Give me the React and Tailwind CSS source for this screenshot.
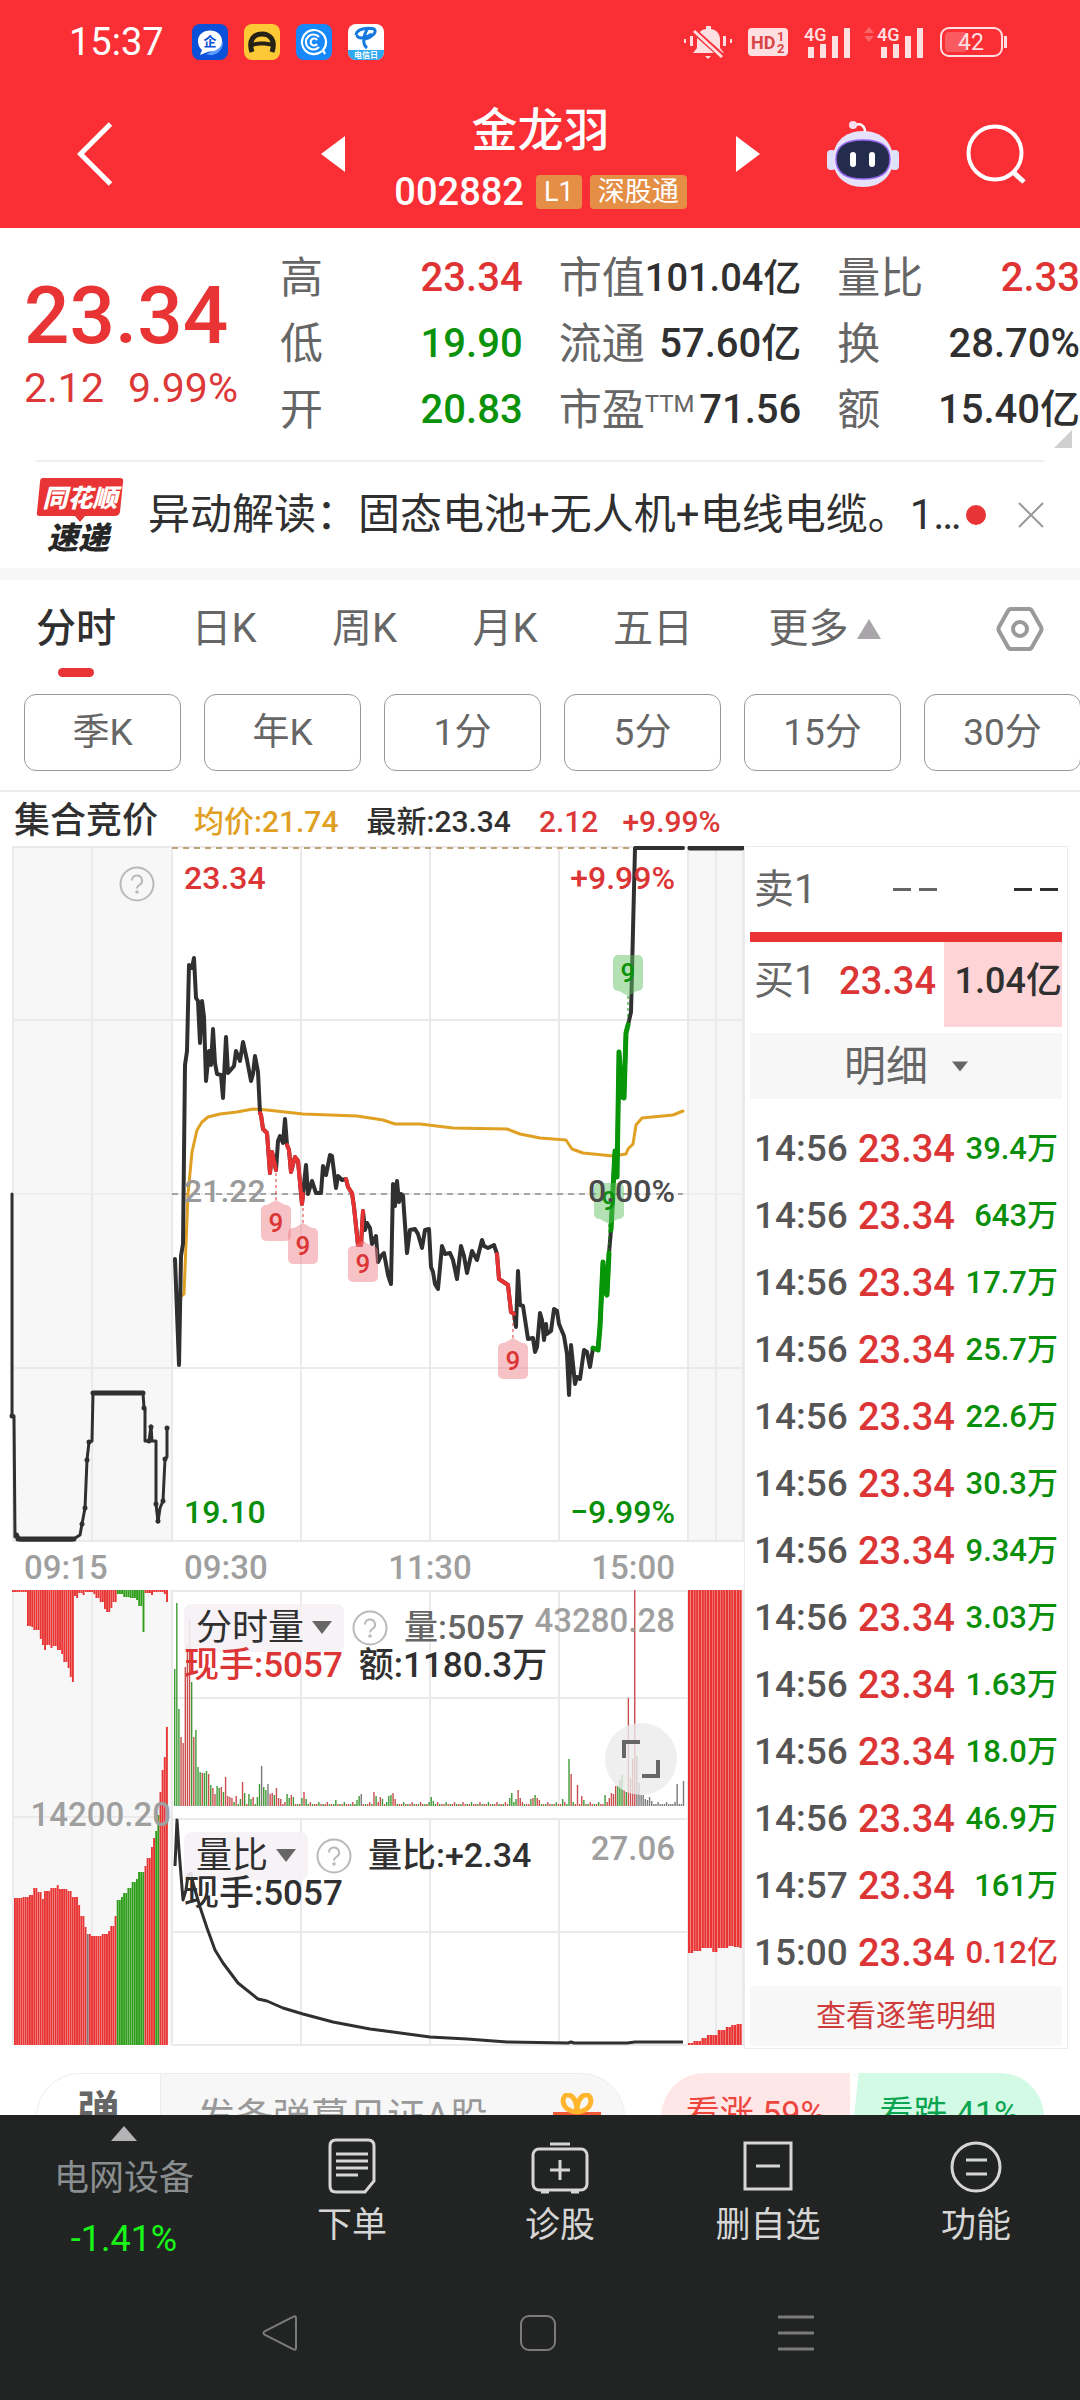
import { useState } from "react";

const stats = [
  [
    { label: "高", value: "23.34", color: "text-[#e03434]" },
    { label: "低", value: "19.90", color: "text-[#0a920a]" },
    { label: "开", value: "20.83", color: "text-[#0a920a]" },
  ],
  [
    { label: "市值", value: "101.04亿", color: "text-[#303030]" },
    { label: "流通", value: "57.60亿", color: "text-[#303030]" },
    { label: "市盈", sup: "TTM", value: "71.56", color: "text-[#303030]" },
  ],
  [
    { label: "量比", value: "2.33", color: "text-[#e03434]" },
    { label: "换", value: "28.70%", color: "text-[#303030]" },
    { label: "额", value: "15.40亿", color: "text-[#303030]" },
  ],
];

const tabs = ["分时", "日K", "周K", "月K", "五日", "更多"];
const periods = ["季K", "年K", "1分", "5分", "15分", "30分"];

const trades = [
  ["14:56", "39.4万"],
  ["14:56", "643万"],
  ["14:56", "17.7万"],
  ["14:56", "25.7万"],
  ["14:56", "22.6万"],
  ["14:56", "30.3万"],
  ["14:56", "9.34万"],
  ["14:56", "3.03万"],
  ["14:56", "1.63万"],
  ["14:56", "18.0万"],
  ["14:56", "46.9万"],
  ["14:57", "161万"],
  ["15:00", "0.12亿"],
];

const RED = "#e83433";
const GREEN = "#2f9e1b";
const INK = "#303030";

const auctionLine =
  "12,1194 12,1416 14,1416 15,1537 17,1534 20,1540 72,1540 80,1535 82,1524 85,1508 87,1460 89,1442 92,1441 93,1393 143,1393 144,1408 145,1409 145,1441 149,1441 151,1426 152,1441 156,1441 156,1504 158,1522 160,1508 163,1501 165,1459 167,1457 167,1428";

const priceLine =
  "175,1259 179,1365 181,1256 183,1244 185,1065 187,1051 189,965 192,968 194,958 196,998 198,1001 200,1043 202,1001 204,1017 206,1081 209,1051 211,1065 213,1029 215,1063 217,1074 221,1075 223,1098 226,1037 228,1073 234,1066 236,1051 240,1061 243,1042 247,1060 251,1081 253,1074 255,1056 258,1072 260,1113 261,1115 263,1129 267,1133 270,1173 272,1152 276,1170 278,1141 280,1136 283,1143 285,1119 287,1145 289,1150 291,1172 295,1157 298,1161 302,1204 303,1194 306,1165 308,1194 312,1181 316,1193 321,1193 323,1166 326,1175 330,1155 332,1156 336,1188 338,1176 342,1180 346,1179 348,1187 352,1193 354,1207 358,1245 361,1245 363,1211 365,1230 367,1223 370,1228 372,1244 376,1236 378,1262 381,1256 384,1253 388,1275 391,1284 393,1184 395,1206 397,1181 399,1202 401,1194 403,1196 407,1253 410,1230 415,1229 418,1234 422,1248 425,1230 429,1229 431,1267 433,1272 435,1284 438,1289 442,1246 445,1254 450,1253 453,1260 457,1279 461,1246 464,1256 467,1273 472,1251 477,1260 482,1240 484,1246 488,1248 494,1245 497,1254 499,1279 508,1285 511,1312 514,1314 516,1327 518,1271 520,1305 523,1306 528,1339 533,1338 535,1352 537,1347 540,1313 542,1320 544,1340 546,1324 547,1334 551,1331 554,1309 557,1311 559,1324 564,1336 567,1354 569,1395 571,1345 575,1384 577,1377 580,1379 584,1350 587,1352 590,1367 593,1348 598,1350 600,1327 603,1262 605,1292 607,1295 609,1253 611,1230 613,1189 615,1151 617,1177 619,1052 622,1097 624,1098 626,1033 628,1025 631,1012 635,848 683,848";

const fallingRuns = [
  "260,1113 261,1115 263,1129 267,1133 270,1173 272,1152 276,1170",
  "287,1145 289,1150 291,1172 295,1157 298,1161 302,1204 303,1194",
  "346,1179 348,1187 352,1193 354,1207 358,1245 361,1245 363,1211",
  "497,1254 499,1279 508,1285 511,1312 514,1314",
];

const risingRuns = [
  "593,1348 598,1350 600,1327 603,1262 605,1292 607,1295 609,1253",
  "611,1230 613,1189 615,1151 617,1177 619,1052 622,1097 624,1098 626,1033 628,1025",
];

const averageLine =
  "180,1297 184,1294 186,1244 188,1194 192,1152 197,1130 202,1122 208,1117 220,1114 237,1112 253,1109 267,1110 303,1114 357,1116 383,1120 395,1124 420,1124 453,1128 507,1129 520,1134 540,1138 566,1140 572,1149 583,1153 613,1156 626,1154 628,1149 633,1144 636,1125 642,1118 673,1115 683,1111";

const ratioLine =
  "175,1866 177,1820 179,1850 183,1900 186,1890 188,1875 191,1873 193,1883 200,1907 207,1928 215,1950 223,1963 238,1983 258,1999 267,2001 283,2008 303,2014 333,2022 370,2029 393,2032 430,2037 467,2039 507,2042 568,2043 571,2042 574,2043 627,2043 635,2042 683,2042";

// [x, edge of the bar], stepwise profile of the call auction volume
const auctionTop = [
  [12, 1592], [26, 1626], [30, 1627], [33, 1630], [38, 1639], [40, 1645], [43, 1650], [45, 1645],
  [49, 1648], [52, 1646], [56, 1650], [60, 1654], [63, 1662], [66, 1668], [69, 1677], [71, 1682],
  [73, 1596], [76, 1598], [78, 1593], [81, 1595], [84, 1592], [92, 1594], [95, 1598], [98, 1602],
  [102, 1609], [105, 1612], [109, 1608], [112, 1602], [115, 1594], [122, 1597], [129, 1598],
  [134, 1600], [138, 1606], [142, 1632], [144, 1593], [149, 1595], [153, 1592], [163, 1594],
  [165, 1602], [167, 1608],
];

const auctionBottom = [
  [14, 1898], [22, 1897], [27, 1895], [33, 1888], [37, 1892], [41, 1899], [43, 1891], [49, 1888],
  [56, 1885], [58, 1889], [67, 1891], [70, 1897], [77, 1905], [80, 1916], [83, 1927], [86, 1934],
  [90, 1936], [100, 1934], [107, 1931], [109, 1926], [113, 1916], [116, 1900], [120, 1897],
  [123, 1893], [126, 1888], [130, 1882], [134, 1879], [138, 1872], [143, 1866], [146, 1858],
  [149, 1847], [152, 1838], [154, 1831], [156, 1815], [158, 1792], [160, 1770], [163, 1757],
  [165, 1727], [168, 1684],
];

const closingTop = [
  [688, 1953], [691, 1951], [701, 1948], [712, 1952], [717, 1948], [726, 1946], [732, 1947], [738, 1948],
];

const closingBottom = [
  [688, 2043], [692, 2041], [700, 2038], [705, 2035], [716, 2030], [725, 2027], [731, 2025], [736, 2024],
];

const profileAt = (profile, x) => {
  let edge = profile[0][1];
  profile.forEach(([px, py]) => {
    if (px <= x) edge = py;
  });
  return edge;
};

const steps = (from, to, size) =>
  Array.from({ length: Math.floor((to - from) / size) }, (_, i) => from + i * size);

const volumeSpikes = {
  0: [137, "g"], 1: [203, "g"], 2: [97, "g"], 3: [69, "r"], 4: [63, "r"], 5: [139, "r"], 6: [161, "r"],
  7: [188, "r"], 8: [124, "g"], 9: [69, "r"], 10: [76, "g"], 11: [39, "g"], 12: [34, "g"], 13: [33, "r"],
  14: [33, "g"], 15: [35, "g"], 16: [32, "r"], 17: [21, "g"], 18: [18, "r"], 19: [12, "r"], 20: [20, "g"],
  21: [18, "g"], 22: [19, "r"], 23: [14, "g"], 24: [29, "r"], 25: [10, "r"], 26: [9, "r"], 27: [8, "r"],
  29: [10, "r"], 31: [7, "g"], 32: [24, "r"], 33: [13, "g"], 35: [12, "g"], 36: [7, "g"], 37: [9, "r"],
  39: [9, "g"], 40: [22, "g"], 41: [40, "k"], 42: [19, "g"], 43: [16, "g"], 44: [22, "k"], 45: [12, "r"],
  46: [13, "r"], 47: [11, "g"], 48: [18, "r"], 49: [8, "r"], 50: [7, "r"], 53: [12, "g"], 54: [8, "g"],
  55: [11, "r"], 56: [9, "g"], 60: [8, "g"], 61: [14, "r"], 62: [7, "g"], 76: [6, "g"], 86: [6, "g"],
  87: [10, "g"], 88: [12, "k"], 94: [14, "r"], 95: [10, "g"], 97: [9, "r"], 98: [7, "g"], 101: [10, "g"],
  102: [11, "g"], 103: [13, "r"], 104: [7, "r"], 121: [9, "g"], 122: [5, "g"], 158: [8, "g"],
  159: [13, "g"], 161: [7, "g"], 162: [16, "r"], 163: [8, "r"], 168: [7, "g"], 169: [8, "r"],
  170: [11, "g"], 171: [8, "r"], 172: [6, "r"], 183: [7, "g"], 186: [47, "g"], 187: [32, "r"],
  190: [21, "r"], 192: [10, "r"], 193: [6, "g"], 203: [11, "g"], 205: [8, "r"], 206: [13, "r"],
  207: [12, "r"], 208: [20, "r"], 209: [20, "g"], 210: [26, "g"], 211: [31, "g"], 212: [16, "r"],
  213: [14, "g"], 214: [108, "r"], 215: [28, "r"], 216: [47, "r"], 217: [216, "r"], 218: [50, "k"],
  219: [23, "k"], 220: [11, "k"], 221: [11, "k"], 222: [7, "k"], 223: [6, "k"], 224: [9, "k"],
  225: [5, "k"], 237: [22, "k"], 240: [25, "k"],
};

const volumeColors = { g: "#3f9a35", r: "#c9504f", k: "#7b7b7b" };

const volumeBars = Array.from({ length: 241 }, (_, i) => {
  const fallback = i > 218 ? "k" : (i * 7) % 5 < 2 ? "g" : "r";
  const [height, kind] = volumeSpikes[i] || [2 + ((i * 13) % 4 === 0 ? 2 : 0), fallback];
  return { x: 174 + i * 2.12, height, fill: volumeColors[kind] };
});

const signals = [
  { x: 276, y: 1205, from: 1172 },
  { x: 303, y: 1228, from: 1206 },
  { x: 363, y: 1246, from: 1246 },
  { x: 513, y: 1343, from: 1316 },
  { x: 628, y: 955, from: 1022, up: true },
  { x: 609, y: 1183, from: 1250, up: true },
];

function Signal({ x, y, from, up }) {
  const color = up ? "#0a920a" : "#dc3535";
  return (
    <g>
      <line x1={x} x2={x} y1={up ? y + 41 : y - 5} y2={from} stroke={color} strokeDasharray="3 3" />
      <g fill={up ? "#62c062" : "#ef8087"} fillOpacity="0.48">
        <rect x={x - 15} y={y} width="30" height="36" rx="5" />
        <path
          d={
            up
              ? `M${x - 9} ${y + 36}h18l-9 5z`
              : `M${x - 9} ${y}h18l-9 -5z`
          }
        />
      </g>
      <text x={x} y={y + 27} textAnchor="middle" fontSize="26" fontWeight="500" fill={color}>
        9
      </text>
    </g>
  );
}

function Charts() {
  const gridX = [301, 430, 559];
  return (
    <svg
      viewBox="0 846 744 1200"
      className="block w-full"
      role="img"
      aria-label="分时走势"
    >
      {/* shaded auction columns */}
      <g fill="#f7f7f7">
        <rect x="13" y="846" width="159" height="695" />
        <rect x="688" y="846" width="56" height="695" />
        <rect x="13" y="1590" width="159" height="455" />
        <rect x="688" y="1590" width="56" height="455" />
      </g>
      <g stroke="#ebe9eb" strokeWidth="2">
        {[847, 1020, 1194, 1368, 1541].map((y) => (
          <line key={y} x1="13" x2="744" y1={y} y2={y} strokeOpacity={y === 1194 ? 0.7 : 1} />
        ))}
        {[13, 92, 172, 688, 716, 743].map((x) => (
          <path key={x} d={`M${x} 846V1541M${x} 1590V2045`} />
        ))}
        {gridX.map((x) => (
          <path key={x} d={`M${x} 846V1541M${x} 1590V1806M${x} 1819V2045`} />
        ))}
        {[1591, 1698, 1819, 1932, 2045].map((y) => (
          <line key={y} x1="172" x2="688" y1={y} y2={y} />
        ))}
        <path d="M13 1817H172" />
      </g>
      <line x1="172" x2="640" y1="848" y2="848" stroke="#bda377" strokeWidth="2" strokeDasharray="6 5" />
      <line x1="172" x2="683" y1="1194" y2="1194" stroke="#a5a5a5" strokeWidth="2" strokeDasharray="6 5" />

      <g fill="none" strokeLinejoin="round" strokeLinecap="round">
        <polyline points={auctionLine} stroke={INK} strokeWidth="3" />
        <path d="M18 1539H74M93 1393H143" stroke={INK} strokeWidth="5" />
        <path
          d="M12 1416h0M82 1524h0M85 1508h0M87 1460h0M89 1442h0M144 1408h0M149 1441h0M151 1427h0M156 1504h0M158 1521h0M163 1501h0M165 1459h0M167 1428h0"
          stroke={INK}
          strokeWidth="5"
        />
        <polyline points={averageLine} stroke="#e0a024" strokeWidth="3" />
        <polyline points={priceLine} stroke={INK} strokeWidth="4" />
        {fallingRuns.map((points) => (
          <polyline key={points} points={points} stroke="#e63232" strokeWidth="4" />
        ))}
        {risingRuns.map((points) => (
          <polyline key={points} points={points} stroke="#079607" strokeWidth="5" />
        ))}
        <path d="M690 848H742" stroke={INK} strokeWidth="5" />
      </g>

      {signals.map((signal) => (
        <Signal key={signal.x} {...signal} />
      ))}

      <g fontSize="32" fontWeight="500">
        <text x="184" y="889" fill="#dc3535">23.34</text>
        <text x="675" y="889" fill="#dc3535" textAnchor="end">+9.99%</text>
        <text x="184" y="1202" fill="#9a9a9a">21.22</text>
        <text x="675" y="1202" fill="#4a4a4a" textAnchor="end">0.00%</text>
        <text x="184" y="1523" fill="#0a8f0a">19.10</text>
        <text x="675" y="1523" fill="#0a8f0a" textAnchor="end">−9.99%</text>
      </g>
      <g fontSize="33" fontWeight="500" fill="#9f9f9f">
        <text x="24" y="1579">09:15</text>
        <text x="184" y="1579">09:30</text>
        <text x="430" y="1579" textAnchor="middle">11:30</text>
        <text x="675" y="1579" textAnchor="end">15:00</text>
      </g>

      {/* call auction volume */}
      {steps(12, 170, 2.14).map((x) => (
        <rect
          key={x}
          x={x}
          y="1590"
          width="1.9"
          height={profileAt(auctionTop, x) - 1590}
          fill={x > 115 && x < 143 ? GREEN : RED}
        />
      ))}
      {steps(14, 170, 2.14).map((x) => {
        const top = profileAt(auctionBottom, x);
        const green = (x > 115 && x < 143) || (x > 155 && x < 157.5);
        const flat = x > 86 && x < 88.5;
        return (
          <rect
            key={x}
            x={x}
            y={top}
            width="1.9"
            height={2045 - top}
            fill={flat ? "#8c7370" : green ? GREEN : RED}
          />
        );
      })}
      {steps(688, 743, 2.7).map((x) => {
        const bottom = profileAt(closingBottom, x);
        return (
          <g key={x} fill={RED}>
            <rect x={x} y="1590" width="2.4" height={profileAt(closingTop, x) - 1590} />
            <rect x={x} y={bottom} width="2.4" height={2045 - bottom} />
          </g>
        );
      })}
      <text x="171" y="1826" textAnchor="end" fontSize="33" fontWeight="500" fill="#9f9f9f">
        14200.20
      </text>

      {volumeBars.map((bar) => (
        <rect key={bar.x} x={bar.x} y={1806 - bar.height} width="1.4" height={bar.height} fill={bar.fill} />
      ))}
      <polyline points={ratioLine} fill="none" stroke={INK} strokeWidth="3" strokeLinejoin="round" />

      <g fontSize="33" fontWeight="500" fill="#9f9f9f" textAnchor="end">
        <text x="675" y="1632">43280.28</text>
        <text x="675" y="1860">27.06</text>
      </g>
    </svg>
  );
}

function Help({ label, className = "" }) {
  return (
    <button type="button" aria-label={label} className={`h-9 w-9 shrink-0 ${className}`}>
      <svg viewBox="0 0 36 36" fill="none" stroke="#b9b9b9" strokeWidth="2">
        <circle cx="18" cy="18" r="16.5" />
        <path d="M13 14.500a5 5 0 1 1 7.500 4.300c-1.800 1-2.500 1.700-2.500 3.700" />
        <circle cx="18" cy="26" r="0.800" fill="#b9b9b9" />
      </svg>
    </button>
  );
}

function IndicatorButton({ children }) {
  return (
    <button
      type="button"
      className="flex h-12 items-center gap-2 rounded-lg bg-[#f5f1f5]/90 px-3 text-4xl text-[#303030]"
    >
      {children}
      <svg viewBox="0 0 20 13" className="h-[13px] w-5" fill="#666">
        <path d="M0 0h20l-10 13z" />
      </svg>
    </button>
  );
}

function StatusBar() {
  return (
    <div className="flex h-20 items-center pl-[69px] pr-[72px] pt-1 text-white">
      <span className="text-[38px] leading-10">15:37</span>
      <div className="ml-7 flex gap-4">
        <svg viewBox="0 0 36 36" className="h-9 w-9">
          <rect width="36" height="36" rx="8" fill="#0b50d8" />
          <path d="M14 30c8 4 18-3 17-13l-5 8z" fill="#5c9bff" />
          <path d="M18 6.500c7 0 12 4.500 12 10.500s-5 10.500-12 10.500l-2 .3-8 3.200 2-5c-2.500-2-4-5-4-9 0-6 5-10.500 12-10.500z" fill="#fff" />
          <text x="18" y="22" fontSize="13" fontWeight="700" textAnchor="middle" fill="#0b50d8">企</text>
        </svg>
        <svg viewBox="0 0 36 36" className="h-9 w-9">
          <rect width="36" height="36" rx="8" fill="#fdc936" />
          <path d="M8 28c-4-12 2-18 10-18s14 6 10 18" fill="none" stroke="#272218" strokeWidth="5" />
          <path d="M8 19c5-2 15-2 20 0v4c-5-2-15-2-20 0z" fill="#272218" />
        </svg>
        <svg viewBox="0 0 36 36" className="h-9 w-9" fill="none" stroke="#fff" strokeWidth="2.200">
          <rect width="36" height="36" rx="8" fill="#1788fa" stroke="none" />
          <path d="M26 27a12 12 0 1 1 4-9c0 4-1 6-3 8l2 4" />
          <path d="M23 23a7.500 7.500 0 1 1 0-10" />
          <path d="M21 20a3.500 3.500 0 1 1 0-4" />
        </svg>
        <svg viewBox="0 0 36 36" className="h-9 w-9">
          <rect width="36" height="36" rx="8" fill="#fff" />
          <path d="M0 26h36v2a8 8 0 0 1-8 8H8a8 8 0 0 1-8-8z" fill="#30a8f0" />
          <path d="M8 11c0-6 12-8 18-6 4 3-3 9-9 10M20 4c-5 8-6 16-1 20M9 11c0 4 8 4 15-1" fill="none" stroke="#1478e0" strokeWidth="3" />
          <text x="18" y="34" fontSize="8" fontWeight="700" textAnchor="middle" fill="#fff">电信日</text>
        </svg>
      </div>

      <div className="ml-auto flex items-center gap-4 text-[#ffe0e2]">
        <svg viewBox="0 0 48 34" className="h-[34px] w-12" fill="currentColor">
          <path d="M22 1h5v3c6 1 9 5 9 11v8l4 5H9l4-5v-8c0-6 3-10 9-11z" />
          <path d="M21 31h6l-3 3z" />
          <path d="M0 14h2v4H0zM6 11h3v10H6zM39 11h3v10h-3zM46 14h2v4h-2z" />
          <path d="M10 6l30 27" stroke="#f92f35" strokeWidth="6" />
          <path d="M10 6l28 26" stroke="currentColor" strokeWidth="3" />
        </svg>
        <svg viewBox="0 0 40 28" className="h-7 w-10">
          <rect width="40" height="28" rx="4" fill="currentColor" />
          <g fill="#d94447" fontWeight="700">
            <text x="3" y="21" fontSize="18">HD</text>
            <text x="29" y="13" fontSize="13">1</text>
            <text x="29" y="25" fontSize="13">2</text>
          </g>
        </svg>
        <svg viewBox="0 0 48 34" className="h-[34px] w-12" fill="currentColor">
          <text x="0" y="16" fontSize="18" fontWeight="500">4G</text>
          <path d="M4 22h6v11H4zM16 19h6v14h-6zM28 11h6v22h-6zM40 3h6v30h-6z" />
        </svg>
        <svg viewBox="0 0 60 34" className="-ml-1 h-[34px] w-[60px]" fill="currentColor">
          <path d="M0 8l5-6 5 6zM0 11h10l-5 6z" fillOpacity="0.3" />
          <text x="13" y="16" fontSize="18" fontWeight="500">4G</text>
          <path d="M17 22h6v11h-6zM29 19h6v14h-6zM41 11h6v22h-6zM53 3h6v30h-6z" />
        </svg>
        <svg viewBox="0 0 68 30" className="h-[30px] w-[68px]">
          <rect x="1" y="1" width="61" height="28" rx="8" fill="none" stroke="currentColor" strokeWidth="2" />
          <rect x="5" y="5" width="22" height="20" rx="4" fill="currentColor" fillOpacity="0.25" />
          <rect x="64" y="9" width="3" height="12" fill="currentColor" />
          <text x="31" y="23" fontSize="23" textAnchor="middle" fill="currentColor">42</text>
        </svg>
      </div>
    </div>
  );
}

function Robot() {
  return (
    <svg viewBox="0 0 72 67" className="h-[67px] w-[72px]">
      <path d="M28 4c6-2 10 1 10 7" fill="none" stroke="#fff" strokeWidth="2.500" />
      <circle cx="26" cy="4" r="4" fill="#f6dfee" />
      <rect x="0" y="29" width="9" height="20" rx="4" fill="#dfe0fa" />
      <rect x="63" y="29" width="9" height="20" rx="4" fill="#dfe0fa" />
      <path d="M36 10c19 0 30 12 30 28S55 66 36 66 6 54 6 38s11-28 30-28z" fill="#e6e2fb" />
      <path d="M36 19c18 0 27 6 27 19s-9 20-27 20S9 51 9 38s9-19 27-19z" fill="#232c4c" stroke="#9464ee" strokeWidth="1.500" />
      <rect x="23" y="31" width="6" height="15" rx="3" fill="#fff" />
      <rect x="42" y="31" width="6" height="15" rx="3" fill="#fff" />
    </svg>
  );
}

function Header() {
  return (
    <header className="bg-[#f92f35] text-white">
      <StatusBar />
      <div className="flex h-[148px] items-center justify-between pl-[77px] pr-[54px]">
        <div className="flex w-[268px] items-center justify-between">
          <button type="button" aria-label="返回">
            <svg viewBox="0 0 35 64" className="h-16 w-9" fill="none" stroke="currentColor" strokeWidth="5">
              <path d="M33 2L3 32l30 30" />
            </svg>
          </button>
          <button type="button" aria-label="上一只">
            <svg viewBox="0 0 24 36" className="h-9 w-6" fill="currentColor">
              <path d="M24 0v36L0 18z" />
            </svg>
          </button>
        </div>
        <div className="flex flex-col items-center gap-4 pt-2">
          <h1 className="text-[46px] font-medium leading-[52px]">金龙羽</h1>
          <div className="flex items-center gap-2">
            <span className="mr-1 text-[38px] font-medium leading-10">002882</span>
            <span className="rounded-sm bg-[#e58e46] px-2 text-[27px] leading-[34px]">L1</span>
            <span className="rounded-sm bg-[#e58e46] px-2 text-[27px] leading-[34px]">深股通</span>
          </div>
        </div>
        <div className="flex w-[290px] items-center justify-between">
          <button type="button" aria-label="下一只">
            <svg viewBox="0 0 24 36" className="h-9 w-6" fill="currentColor">
              <path d="M0 0v36l24-18z" />
            </svg>
          </button>
          <button type="button" aria-label="助手">
            <Robot />
          </button>
          <button type="button" aria-label="搜索">
            <svg viewBox="0 0 60 60" className="h-[60px] w-[60px]" fill="none" stroke="currentColor" strokeWidth="4">
              <circle cx="29" cy="29" r="26.500" />
              <path d="M47 48l11 10" strokeWidth="5" />
            </svg>
          </button>
        </div>
      </div>
    </header>
  );
}

function Quote() {
  return (
    <section className="relative flex h-[232px] items-center">
      <div className="w-[280px] shrink-0 pl-6 pt-1 text-[#e83434]">
        <p className="text-[80px] font-medium leading-[84px]">23.34</p>
        <p className="flex gap-6 text-[41px] leading-[60px] text-[#dc3838]">
          <span>2.12</span>
          <span>9.99%</span>
        </p>
      </div>
      <div className="grid flex-1 grid-cols-3 gap-9">
        {stats.map((column) => (
          <dl key={column[0].label} className="flex flex-col">
            {column.map((item) => (
              <div key={item.label} className="flex h-[66px] items-center justify-between whitespace-nowrap">
                <dt className="flex text-[43px] leading-[60px] text-[#666]">
                  {item.label}
                  {item.sup && <sup className="top-0 pt-3 text-2xl leading-6">{item.sup}</sup>}
                </dt>
                <dd
                  className={`font-medium leading-[60px] ${
                    item.value.length > 6 && item.label.length > 1 ? "text-[38px]" : "text-[40px]"
                  } ${item.color}`}
                >
                  {item.value}
                </dd>
              </div>
            ))}
          </dl>
        ))}
      </div>
      <svg viewBox="0 0 18 18" className="absolute bottom-3 right-2 h-[18px] w-[18px]" fill="#cfcfcf">
        <path d="M18 0v18H0z" />
      </svg>
    </section>
  );
}

function News() {
  return (
    <section className="mx-9 flex h-[108px] items-center border-t-2 border-[#efefef]">
      <svg viewBox="0 0 88 74" className="h-[74px] w-[88px] shrink-0 overflow-visible">
        <path d="M7 0h77q4 0 3 4l-3 30q-1 4-5 4H49l-5 6-5-6H4q-4 0-3-4L4 4q0-4 3-4z" fill="#e83434" />
        <g fontWeight="900" fontStyle="italic">
          <text x="44" y="29" fontSize="25" textAnchor="middle" fill="#fff">同花顺</text>
          <text x="42" y="71" fontSize="31" textAnchor="middle" fill="#262626">速递</text>
        </g>
      </svg>
      <p className="ml-6 min-w-0 flex-1 truncate text-[42px] leading-[60px] text-[#303030]">
        异动解读：固态电池+无人机+电线电缆。1...
      </p>
      <span className="h-5 w-5 shrink-0 rounded-full bg-[#e83434]" />
      <button type="button" aria-label="关闭" className="ml-8 shrink-0">
        <svg viewBox="0 0 26 26" className="h-[26px] w-[26px]" stroke="#999" strokeWidth="2">
          <path d="M1 1l24 24M25 1L1 25" />
        </svg>
      </button>
    </section>
  );
}

function Tabs() {
  const [active, setActive] = useState("分时");

  return (
    <nav className="mb-4 flex h-[98px] items-center justify-between px-9">
      {tabs.map((tab) => (
        <button
          key={tab}
          type="button"
          onClick={() => setActive(tab)}
          className={`relative flex h-24 items-center gap-2 text-[40px] leading-[60px] ${
            active === tab ? "font-medium text-[#303030]" : "text-[#666]"
          }`}
        >
          {tab}
          {tab === "更多" && (
            <svg viewBox="0 0 24 20" className="h-5 w-6" fill="#a8a6a9">
              <path d="M12 0l12 20H0z" />
            </svg>
          )}
          {active === tab && (
            <span className="absolute bottom-0 left-1/2 h-[9px] w-9 -translate-x-1/2 rounded-full bg-[#e83434]" />
          )}
        </button>
      ))}
      <button type="button" aria-label="设置" className="ml-10">
        <svg viewBox="0 0 48 46" className="h-[46px] w-12" fill="none" stroke="#9a9a9a" strokeWidth="4">
          <path d="M15 3h18q2 0 3 2l9 16q1 2 0 4l-9 16q-1 2-3 2H15q-2 0-3-2L3 25q-1-2 0-4l9-16q1-2 3-2z" />
          <circle cx="24" cy="23" r="7" />
        </svg>
      </button>
    </nav>
  );
}

function OrderPanel() {
  return (
    <aside className="flex flex-col border border-[#ebebeb] px-[5px]">
      <div className="flex h-[85px] items-center justify-between px-1 text-[40px] text-[#666]">
        <span>卖1</span>
        <span className="flex gap-2">
          <i className="h-[3px] w-[18px] bg-[#666]" />
          <i className="h-[3px] w-[18px] bg-[#666]" />
        </span>
        <span className="flex gap-2">
          <i className="h-[3px] w-[18px] bg-[#303030]" />
          <i className="h-[3px] w-[18px] bg-[#303030]" />
        </span>
      </div>
      <div className="h-[10px] bg-[#e93334]" />
      <div className="flex h-[85px] text-[38px] font-medium">
        <span className="flex-1 pl-1 text-[40px] font-normal leading-[78px] text-[#666]">买1</span>
        <span className="pr-2 leading-[78px] text-[#dc3535]">23.34</span>
        <span className="w-[118px] bg-[#ffd4d6] text-right text-[36px] leading-[78px] text-[#303030]">1.04亿</span>
      </div>
      <button
        type="button"
        className="mt-[6px] flex h-[66px] items-center justify-center gap-6 bg-[#f7f7f7] text-[42px] text-[#666]"
      >
        明细
        <svg viewBox="0 0 16 10" className="h-[11px] w-4" fill="#666">
          <path d="M0 0h16l-8 10z" />
        </svg>
      </button>
      <table className="mt-4 w-full">
        <tbody>
          {trades.map(([time, amount], index) => (
            <tr key={index} className="h-[67px] leading-[60px]">
              <td className="w-[108px] pl-1 text-[37px] font-medium text-[#555]">{time}</td>
              <td className="text-[38px] font-medium text-[#dc3535]">23.34</td>
              <td
                className={`pr-1 text-right text-[31px] font-medium ${
                  amount.endsWith("亿") ? "text-[#dc3535]" : "text-[#0a8f0a]"
                }`}
              >
                {amount}
              </td>
            </tr>
          ))}
        </tbody>
      </table>
      <button type="button" className="mt-auto mb-[2px] h-[60px] bg-[#f7f7f7] text-3xl text-[#cf3b3b]">
        查看逐笔明细
      </button>
    </aside>
  );
}

function ChartSection() {
  return (
    <section className="border-t-2 border-[#ececec]">
      <div className="flex h-[54px] items-center pl-[14px] pt-1 text-[30px] font-medium text-[#303030]">
        <h2 className="mr-9 text-4xl">集合竞价</h2>
        <span className="mr-7 text-[#e0a024]">均价:21.74</span>
        <span className="mr-7">最新:23.34</span>
        <span className="mr-6 text-[#dc3838]">2.12</span>
        <span className="text-[#dc3838]">+9.99%</span>
      </div>
      <div className="grid grid-cols-[744fr_324fr] pr-3">
        <div className="relative min-w-0 self-start">
          <Charts />
          <Help label="集合竞价说明" className="absolute left-[16%] top-5" />
          <div className="absolute left-[184px] top-[63%] flex items-center">
            <IndicatorButton>分时量</IndicatorButton>
            <Help label="分时量说明" className="ml-2 mr-4" />
            <span className="text-[34px] font-medium text-[#666]">量:5057</span>
          </div>
          <p className="absolute left-[184px] top-[802px] flex gap-4 text-[35px] leading-9 font-medium text-[#303030]">
            <span className="text-[#dc3535]">现手:5057</span>
            <span>额:1180.3万</span>
          </p>
          <button
            type="button"
            aria-label="全屏"
            className="absolute left-[605px] top-[877px] flex h-[72px] w-[72px] items-center justify-center rounded-full bg-[#ebebeb]/80"
          >
            <svg viewBox="0 0 38 38" className="h-[38px] w-[38px]" fill="none" stroke="#666" strokeWidth="4">
              <path d="M2 18V2h16M36 20v16H20" />
            </svg>
          </button>
          <div className="absolute left-[184px] top-[82%] flex items-center">
            <IndicatorButton>量比</IndicatorButton>
            <Help label="量比说明" className="ml-2 mr-4" />
            <span className="text-[34px] font-medium text-[#303030]">量比:+2.34</span>
          </div>
          <p className="absolute left-[184px] top-[1030px] text-[35px] leading-9 font-medium text-[#303030]">现手:5057</p>
        </div>
        <OrderPanel />
      </div>
    </section>
  );
}

function CommentBar() {
  return (
    <section className="mt-6 flex gap-9 px-9">
      <div className="flex h-[88px] flex-[588] items-center overflow-hidden rounded-full border border-[#ececec] bg-[#f7f7f7]">
        <button type="button" aria-label="弹幕" className="relative h-full w-[124px] border-r border-[#ececec] bg-white pb-3 text-[42px] font-bold text-[#666]">
          弹
          <span className="absolute bottom-6 right-11 h-4 w-4 rounded-full bg-[#dc3535]" />
        </button>
        <input
          aria-label="弹幕内容"
          placeholder="发条弹幕见证A股"
          className="ml-9 w-[320px] bg-transparent text-[38px] leading-[60px] outline-none placeholder:text-[#999]"
        />
        <svg viewBox="0 0 48 48" className="ml-9 h-12 w-12">
          <path d="M0 19h48v29H0z" fill="#e23b25" />
          <path d="M0 19h48v7H0z" fill="#f05a37" />
          <path d="M24 19C6 18 8 0 16 2c6 2 8 8 8 17 0-9 2-15 8-17 8-2 10 16-8 17z" fill="none" stroke="#ffb62e" strokeWidth="5" />
        </svg>
      </div>
      <div className="flex h-[88px] flex-[384] overflow-hidden rounded-full text-[34px]">
        <button type="button" className="flex-1 bg-[#ffe7e7] pb-2 text-[#ee453d]">看涨 59%</button>
        <span className="w-1 skew-x-[-6deg] bg-white" />
        <button type="button" className="flex-1 bg-[#d3fae4] pb-2 text-[#0ba552]">看跌 41%</button>
      </div>
    </section>
  );
}

const actions = [
  {
    label: "下单",
    icon: (
      <>
        <path d="M8 1h32q6 0 6 6v35l-9 11H8q-6 0-6-6V7q0-6 6-6z" />
        <path d="M8 15h32M8 22h32M8 29h32M8 36h22" />
      </>
    ),
  },
  {
    label: "诊股",
    icon: (
      <>
        <path d="M14 5h20" />
        <rect x="-3" y="10" width="54" height="41" rx="6" />
        <path d="M24 21v20M14 31h20M5 53h8M35 53h8" />
      </>
    ),
  },
  {
    label: "删自选",
    icon: (
      <>
        <rect x="1" y="4" width="46" height="46" />
        <path d="M12 27h24" />
      </>
    ),
  },
  {
    label: "功能",
    icon: (
      <>
        <circle cx="24" cy="28" r="24" />
        <path d="M14 21h21M14 35h21" />
      </>
    ),
  },
];

function BottomNav() {
  return (
    <footer className="fixed inset-x-0 bottom-0 h-[285px] bg-[#212422] text-[35px] text-[#d6d6d6]">
      <nav className="grid h-[170px] grid-cols-[248fr_208fr_208fr_208fr_208fr]">
        <a href="#sector" className="flex flex-col items-center pt-[11px] text-[#8b8e90]">
          <svg viewBox="0 0 26 15" className="h-[15px] w-[26px]" fill="#b5b3b5">
            <path d="M13 0l13 15H0z" />
          </svg>
          <span className="mt-2 leading-[60px]">电网设备</span>
          <span className="text-[36px] leading-[60px] text-[#19f519]">-1.41%</span>
        </a>
        {actions.map((action) => (
          <button key={action.label} type="button" className="flex flex-col items-center gap-[2px] pt-6">
            <svg
              viewBox="0 0 48 55"
              className="h-[55px] w-12 overflow-visible"
              fill="none"
              stroke="currentColor"
              strokeWidth="3"
            >
              {action.icon}
            </svg>
            <span className="leading-[60px]">{action.label}</span>
          </button>
        ))}
      </nav>
      <div className="flex items-center justify-center gap-[222px] pr-1 pt-[30px] text-[#7b7b7b]">
        <button type="button" aria-label="系统返回">
          <svg viewBox="0 0 36 36" className="h-9 w-9" fill="none" stroke="currentColor" strokeWidth="2">
            <path d="M34 3v30q0 3-3 1L3 20q-3-2 0-4L31 2q3-2 3 1z" />
          </svg>
        </button>
        <button type="button" aria-label="主页">
          <svg viewBox="0 0 36 36" className="h-9 w-9" fill="none" stroke="currentColor" strokeWidth="2">
            <rect x="1" y="1" width="34" height="34" rx="8" />
          </svg>
        </button>
        <button type="button" aria-label="最近任务">
          <svg viewBox="0 0 36 36" className="h-9 w-9" stroke="currentColor" strokeWidth="3">
            <path d="M0 2h36M0 18h36M0 34h36" />
          </svg>
        </button>
      </div>
    </footer>
  );
}

export default function App() {
  return (
    <div className="min-h-screen overflow-x-hidden bg-white [font-family:Roboto,'Noto_Sans_CJK_SC',sans-serif]">
      <Header />
      <main>
        <Quote />
        <News />
        <div className="h-3 bg-[#f7f7f7]" />
        <Tabs />
        <div className="mb-[19px] flex gap-[23px] overflow-hidden pl-6">
          {periods.map((period) => (
            <button
              key={period}
              type="button"
              className="h-[77px] w-[157px] shrink-0 rounded-xl border border-[#999] text-[37px] text-[#666]"
            >
              {period}
            </button>
          ))}
        </div>
        <ChartSection />
        <CommentBar />
      </main>
      <BottomNav />
    </div>
  );
}
